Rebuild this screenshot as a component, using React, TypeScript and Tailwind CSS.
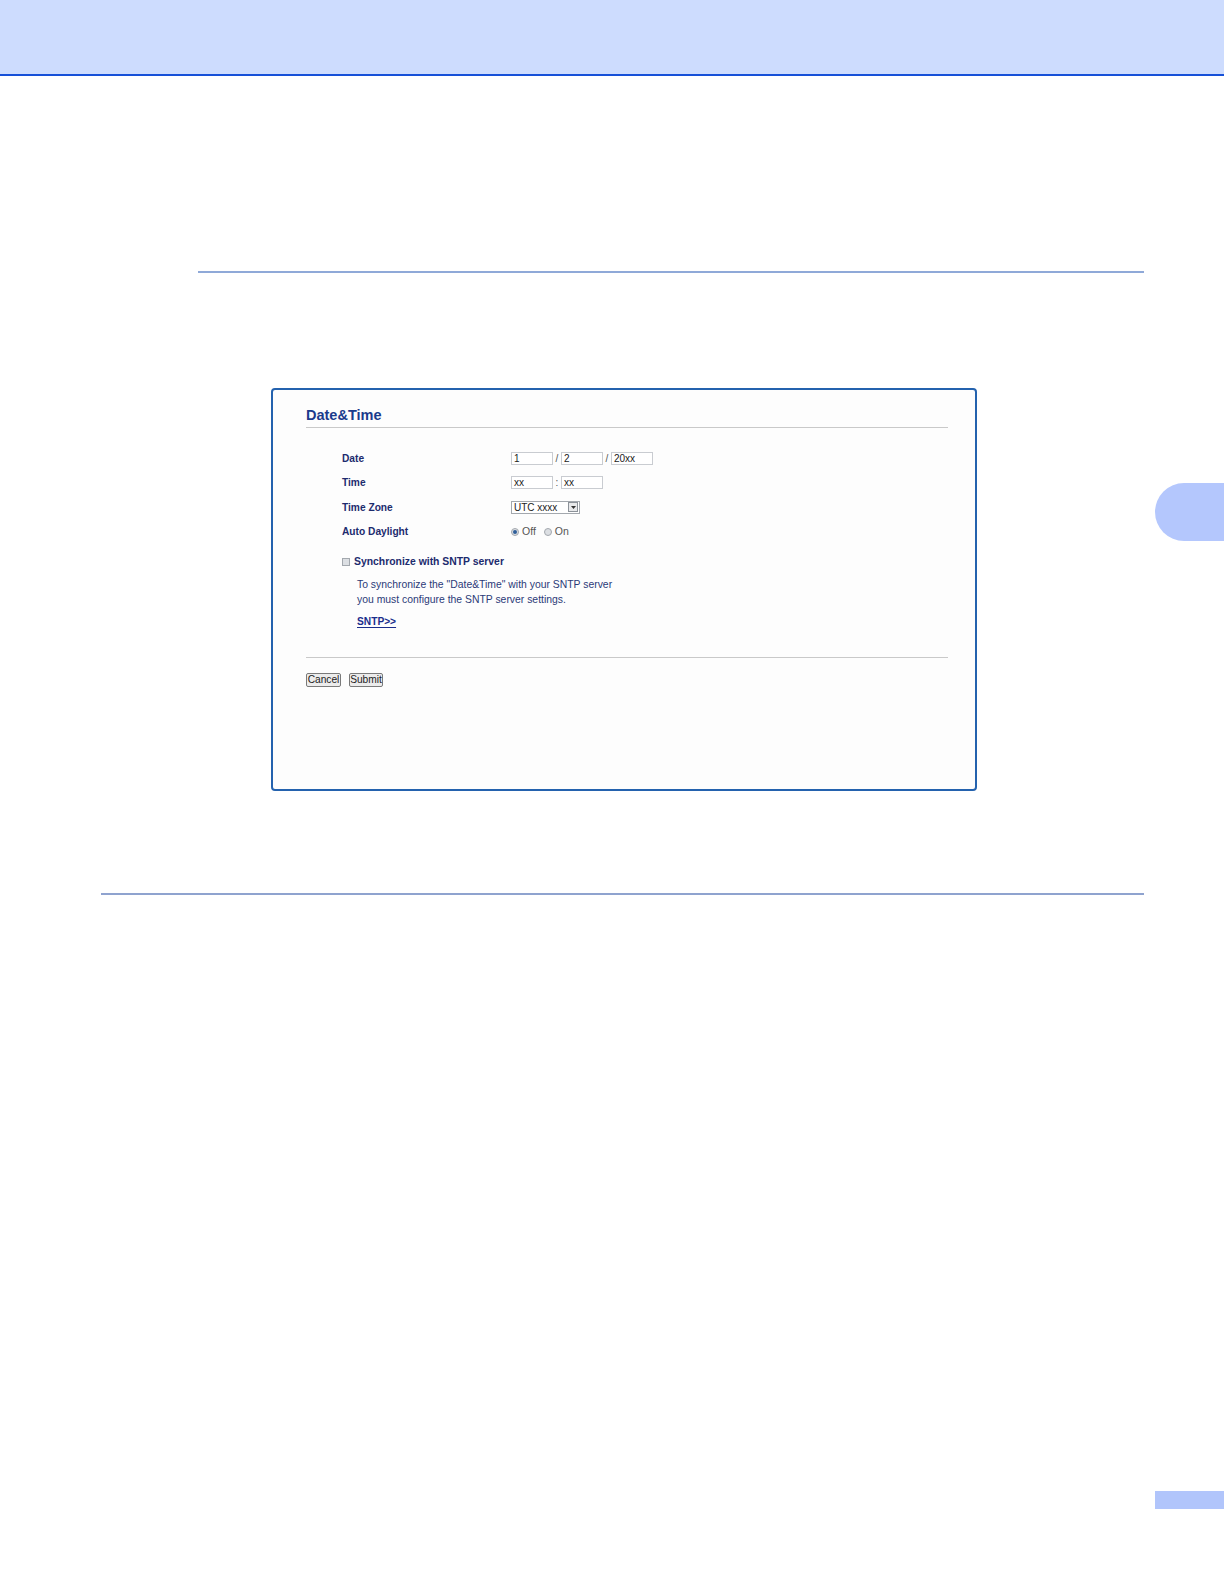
import React from 'react';

const font = { fontFamily: '"Liberation Sans", Arial, sans-serif' };

function TextBox({ value, width = 'w-[42px]' }: { value: string; width?: string }) {
    return (
        <div className={`${width} h-[13px] border border-[#c9ccd1] bg-white pl-[2px] text-[10px] leading-[11px] text-[#222]`}>
            {value}
        </div>
    );
}

function Radio({ checked }: { checked?: boolean }) {
    return (
        <span className="w-[8px] h-[8px] rounded-full border border-[#a3a8ae] bg-[#dcdfe3] flex items-center justify-center">
            {checked && <span className="w-[4px] h-[4px] rounded-full bg-[#2f5f9a]" />}
        </span>
    );
}

export default function App() {
    const rows: { label: string; control: React.ReactNode }[] = [
        {
            label: 'Date',
            control: (
                <div className="flex items-center">
                    <TextBox value="1" />
                    <span className="w-[8px] text-center text-[10px] text-[#555]">/</span>
                    <TextBox value="2" />
                    <span className="w-[8px] text-center text-[10px] text-[#555]">/</span>
                    <TextBox value="20xx" />
                </div>
            )
        },
        {
            label: 'Time',
            control: (
                <div className="flex items-center">
                    <TextBox value="xx" />
                    <span className="w-[8px] text-center text-[10px] text-[#555]">:</span>
                    <TextBox value="xx" />
                </div>
            )
        },
        {
            label: 'Time Zone',
            control: (
                <div className="w-[69px] h-[13px] border border-[#a3a8ae] bg-white flex items-center justify-between pl-[2px] pr-px">
                    <span className="text-[10px] leading-[11px] text-[#222]">UTC xxxx</span>
                    <span className="w-[10px] h-[10px] border border-[#8c9299] bg-[#e8e9eb] flex items-center justify-center">
                        <svg width="5" height="3" viewBox="0 0 5 3"><path d="M0 0h5L2.5 3z" fill="#333" /></svg>
                    </span>
                </div>
            )
        },
        {
            label: 'Auto Daylight',
            control: (
                <div className="flex items-center text-[10.5px] text-[#555]">
                    <Radio checked />
                    <span className="ml-[3px]">Off</span>
                    <span className="ml-[8px]"><Radio /></span>
                    <span className="ml-[3px]">On</span>
                </div>
            )
        }
    ];

    return (
        <div className="w-[1224px] h-[1584px] bg-white flex flex-col" style={font}>
            {/* Header band */}
            <div className="h-[76px] bg-[#cddcfe] border-b-2 border-[#1650d8]" />

            <div className="flex flex-1">
                {/* Main column */}
                <div className="flex-1 flex flex-col">
                    <div className="mt-[195px] ml-[198px] mr-[11px] h-[2px] bg-[#8fa9d8]" />

                    {/* Date&Time panel */}
                    <div className="mt-[115px] ml-[271px] w-[706px] h-[403px] border-2 border-[#2462ae] rounded-[4px] bg-[#fdfdfd] pl-[33px] pr-[27px] pt-[16px]">
                        <div className="h-[18px] leading-[18px] text-[14.5px] font-bold text-[#1b3b8c]">Date&amp;Time</div>
                        <div className="mt-[3px] h-px bg-[#c9c9c9]" />

                        <div className="mt-[18px] pl-[36px]">
                            {rows.map((r) => (
                                <div key={r.label} className="grid grid-cols-[169px_1fr] items-center h-[24.5px]">
                                    <span className="text-[10.2px] font-bold text-[#1c2b6e]">{r.label}</span>
                                    {r.control}
                                </div>
                            ))}
                        </div>

                        <div className="mt-[11px] h-[13px] pl-[36px] flex items-center gap-[4px]">
                            <span className="w-[8px] h-[8px] border border-[#a3a8ae] bg-[#dcdfe3]" />
                            <span className="text-[10.4px] font-bold text-[#1c2b6e]">Synchronize with SNTP server</span>
                        </div>

                        <div className="mt-[9px] pl-[51px] text-[10.4px] leading-[15px] text-[#2b3a78]">
                            <p>To synchronize the "Date&amp;Time" with your SNTP server</p>
                            <p>you must configure the SNTP server settings.</p>
                        </div>

                        <div className="mt-[7px] pl-[51px] text-[10.2px] leading-[15px]">
                            <span className="font-bold text-[#1a2d8c] underline underline-offset-2">SNTP&gt;&gt;</span>
                        </div>

                        <div className="mt-[28px] h-px bg-[#c9c9c9]" />

                        <div className="mt-[15px] flex gap-[8px]">
                            <button className="w-[35px] h-[14px] border border-[#7a7a7a] rounded-[2px] bg-[#ececec] text-[10.2px] leading-[12px] text-[#222]">Cancel</button>
                            <button className="w-[34px] h-[14px] border border-[#7a7a7a] rounded-[2px] bg-[#ececec] text-[10.2px] leading-[12px] text-[#222]">Submit</button>
                        </div>
                    </div>

                    <div className="mt-[102px] ml-[101px] mr-[11px] h-[2px] bg-[#8fa3cf]" />
                </div>

                {/* Right edge: chapter tab and page number box */}
                <div className="w-[69px] flex flex-col">
                    <div className="mt-[407px] h-[58px] rounded-l-full bg-[#b4c7fd]" />
                    <div className="mt-[950px] h-[18px] bg-[#b1c5fb]" />
                </div>
            </div>
        </div>
    );
}
